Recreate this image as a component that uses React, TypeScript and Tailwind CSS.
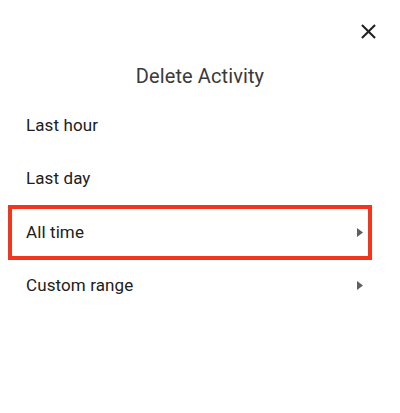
import React from "react";

const OPTIONS: { label: string; more?: boolean; highlighted?: boolean }[] = [
  { label: "Last hour" },
  { label: "Last day" },
  { label: "All time", more: true, highlighted: true },
  { label: "Custom range", more: true },
];

function CloseIcon() {
  return (
    <svg viewBox="0 0 24 24" className="h-[25px] w-[25px]" fill="#222222" aria-hidden="true">
      <path d="M19 6.41L17.59 5 12 10.59 6.41 5 5 6.41 10.59 12 5 17.59 6.41 19 12 13.41 17.59 19 19 17.59 13.41 12z" />
    </svg>
  );
}

function ArrowRight() {
  return (
    <svg viewBox="0 0 6 9" className="h-[9px] w-[6px]" fill="#5f5f5f" aria-hidden="true">
      <path d="M0 0L6 4.5 0 9z" />
    </svg>
  );
}

export default function App() {
  return (
    <div
      className="h-[413px] w-[400px] bg-white text-[#222]"
      style={{ fontFamily: "Roboto, 'Liberation Sans', sans-serif" }}
    >
      {/* header */}
      <div className="flex h-[64px] items-start justify-end pr-[19px] pt-[19px]">
        <button type="button" aria-label="Close" className="flex h-[25px] w-[25px] items-center justify-center">
          <CloseIcon />
        </button>
      </div>

      <h2 className="h-[25px] text-center text-[20px] leading-[25px] tracking-[0.1px] text-[#3a3a3a]">
        Delete Activity
      </h2>

      {/* options */}
      <ul className="mt-[10px]">
        {OPTIONS.map((o) => (
          <li
            key={o.label}
            className="relative flex h-[53.33px] items-center justify-between pl-[26px] pr-[37px] text-[17px] tracking-[0.1px] text-[#202020]"
          >
            <span>{o.label}</span>
            {o.more && <ArrowRight />}
            {o.highlighted && (
              <span className="pointer-events-none absolute bottom-[-1px] left-[8px] right-[28px] top-[-1px] border-[4px] border-[#f1361d]" />
            )}
          </li>
        ))}
      </ul>
    </div>
  );
}
